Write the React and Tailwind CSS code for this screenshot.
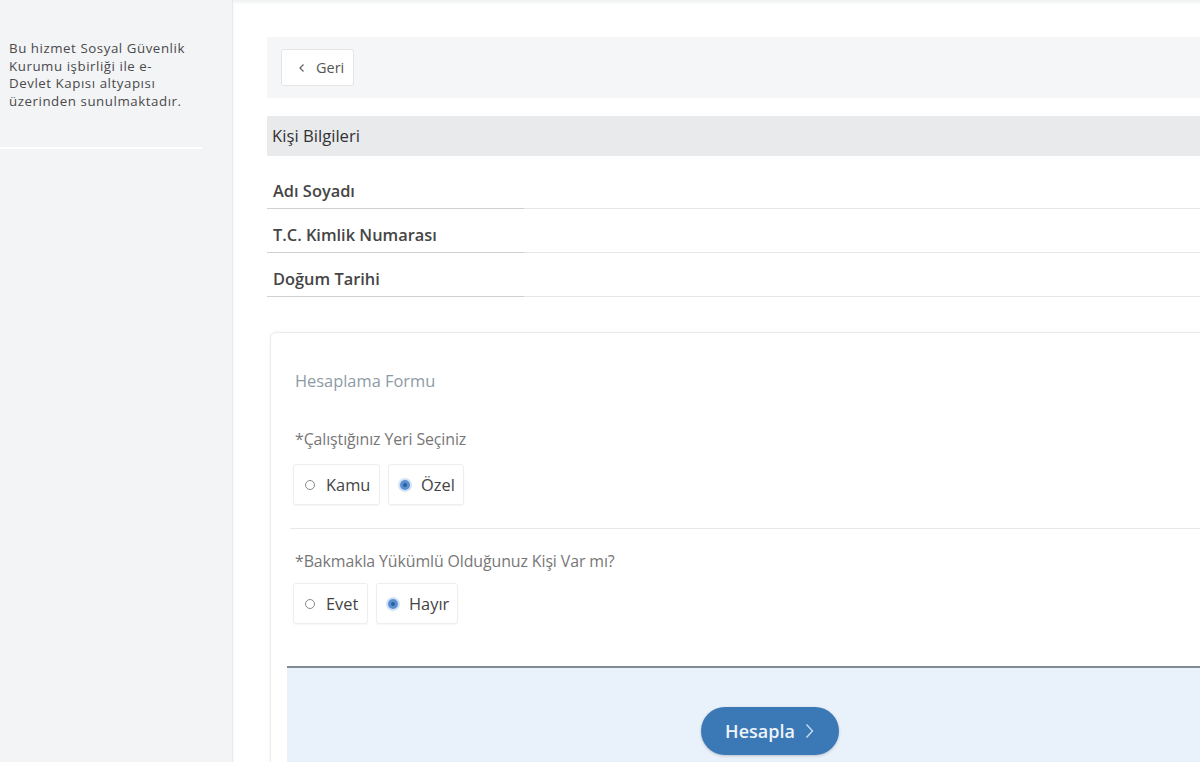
import React from "react";

const font = { fontFamily: '"Open Sans", "Noto Sans", "Liberation Sans", sans-serif' };

function InfoRow({ label, first }) {
  return (
    <div className={`flex ${first ? "mt-[9px]" : ""}`}>
      <div className="w-[257px] h-[44px] border-b border-[#cdd1d4] flex items-end pb-[6px] pl-[6px] text-[16.4px] leading-[22px] font-semibold text-[#454545]">
        {label}
      </div>
      <div className="flex-1 border-b border-[#e4e6e8]" />
    </div>
  );
}

function Radio({ label, checked, w }) {
  return (
    <div
      className={`h-[41px] ${w} flex items-center pl-[11px] border border-[#eeeeee] rounded-[3px] shadow-[0_1px_2px_rgba(0,0,0,0.04)] bg-white`}
    >
      {checked ? (
        <span className="w-[10px] h-[10px] rounded-full bg-[#5a90d2] ring-2 ring-[#d3e3f5] flex items-center justify-center shrink-0">
          <span className="w-[4px] h-[4px] rounded-full bg-[#2a5f9e]" />
        </span>
      ) : (
        <span className="w-[10px] h-[10px] rounded-full border-[1.5px] border-[#8a8a8a] bg-white shrink-0" />
      )}
      <span className="ml-[11px] text-[16.4px] leading-[20px] text-[#444]">{label}</span>
    </div>
  );
}

export default function App() {
  return (
    <div style={font} className="w-[1200px] h-[762px] overflow-hidden flex bg-white">
      {/* Sidebar */}
      <aside className="w-[233px] shrink-0 h-full bg-[#f3f4f6] border-r border-[#e8e9eb] shadow-[1px_0_3px_rgba(0,0,0,0.04)]">
        <div className="pt-[40px] pl-[9px] text-[13.3px] leading-[17.6px] text-[#4a4a4a] tracking-[0.55px]">
          Bu hizmet Sosyal Güvenlik
          <br />
          Kurumu işbirliği ile e-
          <br />
          Devlet Kapısı altyapısı
          <br />
          üzerinden sunulmaktadır.
        </div>
        <div className="mt-[37px] w-[202px] h-[2px] bg-white" />
      </aside>

      {/* Main */}
      <main className="flex-1 min-w-0 flex flex-col">
        <div className="h-[5px] shrink-0 bg-gradient-to-b from-[#eef0f2] to-white" />
        <div className="ml-[34px] w-[1002px] shrink-0 pt-[32px]">
          {/* Geri bar */}
          <div className="h-[61px] bg-[#f5f6f8] flex items-center pl-[14px]">
            <button className="h-[37px] w-[73px] bg-white border border-[#e3e5e7] rounded-[3px] flex items-center pl-[16px] text-[14.5px] text-[#555]">
              <svg width="8" height="10" viewBox="0 0 8 10" className="mr-[10px]">
                <path d="M5.5 1.5 L2 5 L5.5 8.5" fill="none" stroke="#666" strokeWidth="1.3" />
              </svg>
              Geri
            </button>
          </div>

          {/* Kişi Bilgileri */}
          <div className="mt-[18px] h-[40px] bg-[#e9eaec] flex items-center pl-[5px] text-[16.7px] text-[#333]">
            Kişi Bilgileri
          </div>

          <InfoRow label="Adı Soyadı" first />
          <InfoRow label="T.C. Kimlik Numarası" />
          <InfoRow label="Doğum Tarihi" />

          {/* Form card */}
          <div className="mt-[35px] ml-[3px] border border-[#ebebeb] rounded-[6px] shadow-[0_0_4px_rgba(0,0,0,0.04)] bg-white pb-[20px]">
            <div className="pt-[38px] pl-[24px] text-[16.4px] leading-[20px] text-[#8d9ba6]">
              Hesaplama Formu
            </div>

            <div className="mt-[38px] pl-[24px] text-[15.9px] leading-[20px] text-[#777] tracking-[-0.1px]">
              *Çalıştığınız Yeri Seçiniz
            </div>
            <div className="mt-[15px] pl-[22px] flex gap-[8px]">
              <Radio label="Kamu" w="w-[87px]" />
              <Radio label="Özel" checked w="w-[76px]" />
            </div>

            <div className="mt-[23px] ml-[19px] h-px bg-[#e6e8ea]" />

            <div className="mt-[22px] pl-[24px] text-[15.9px] leading-[20px] text-[#777] tracking-[-0.1px]">
              *Bakmakla Yükümlü Olduğunuz Kişi Var mı?
            </div>
            <div className="mt-[12px] pl-[22px] flex gap-[8px]">
              <Radio label="Evet" w="w-[75px]" />
              <Radio label="Hayır" checked w="w-[82px]" />
            </div>

            {/* Bottom panel */}
            <div className="mt-[42px] mx-[16px] border-t-2 border-[#7f8b95] bg-[#e9f1fb] h-[140px] flex justify-center pt-[39px]">
              <button className="h-[48px] w-[138px] rounded-full bg-[#3b78b6] shadow-[0_1px_3px_rgba(0,0,0,0.2)] flex items-center justify-center gap-[10px] text-[18px] font-semibold text-[#eef4fa]">
                Hesapla
                <svg width="9" height="16" viewBox="0 0 9 16">
                  <path d="M1.5 1.5 L7.5 8 L1.5 14.5" fill="none" stroke="#c9dcf0" strokeWidth="1.4" />
                </svg>
              </button>
            </div>
          </div>
        </div>
      </main>
    </div>
  );
}
